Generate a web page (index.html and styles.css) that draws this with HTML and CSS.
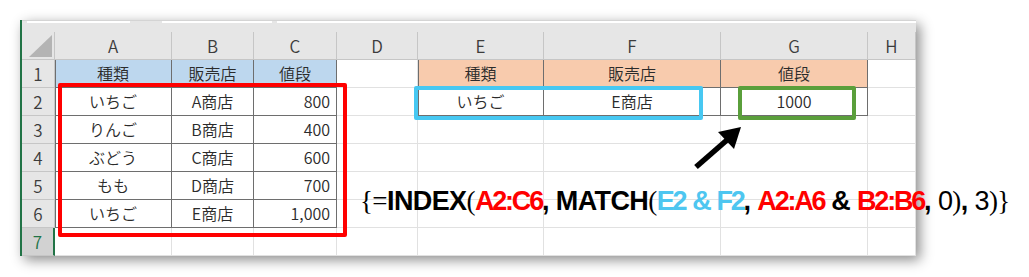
FILE: index.html
```html
<!DOCTYPE html>
<html lang="ja">
<head>
<meta charset="utf-8">
<title>INDEX MATCH 複数条件</title>
<link rel="stylesheet" href="styles.css">
</head>
<body>
<div class="page">
  <div class="sheet">
    <div class="strip">
      <span class="seg seg-a"></span>
      <span class="seg seg-b"></span>
      <span class="seg seg-c"></span>
    </div>
    <div class="grid">
      <div class="corner"><svg width="23" height="22" viewBox="0 0 23 22"><polygon points="23,0 23,22 0,22" fill="#b4b4b4"/></svg></div>
      <div class="cell hd">A</div>
      <div class="cell hd">B</div>
      <div class="cell hd">C</div>
      <div class="cell hd">D</div>
      <div class="cell hd">E</div>
      <div class="cell hd">F</div>
      <div class="cell hd">G</div>
      <div class="cell hd">H</div>

      <div class="cell rh">1</div>
      <div class="cell tb first blue">種類</div>
      <div class="cell tb blue">販売店</div>
      <div class="cell tb blue">値段</div>
      <div class="cell"></div>
      <div class="cell tb first peach">種類</div>
      <div class="cell tb peach">販売店</div>
      <div class="cell tb peach">値段</div>
      <div class="cell"></div>

      <div class="cell rh">2</div>
      <div class="cell tb first">いちご</div>
      <div class="cell tb">A商店</div>
      <div class="cell tb num">800</div>
      <div class="cell"></div>
      <div class="cell tb first">いちご</div>
      <div class="cell tb">E商店</div>
      <div class="cell tb">1000</div>
      <div class="cell"></div>

      <div class="cell rh">3</div>
      <div class="cell tb first">りんご</div>
      <div class="cell tb">B商店</div>
      <div class="cell tb num">400</div>
      <div class="cell"></div>
      <div class="cell"></div>
      <div class="cell"></div>
      <div class="cell"></div>
      <div class="cell"></div>

      <div class="cell rh">4</div>
      <div class="cell tb first">ぶどう</div>
      <div class="cell tb">C商店</div>
      <div class="cell tb num">600</div>
      <div class="cell"></div>
      <div class="cell"></div>
      <div class="cell"></div>
      <div class="cell"></div>
      <div class="cell"></div>

      <div class="cell rh">5</div>
      <div class="cell tb first">もも</div>
      <div class="cell tb">D商店</div>
      <div class="cell tb num">700</div>
      <div class="cell"></div>
      <div class="cell"></div>
      <div class="cell"></div>
      <div class="cell"></div>
      <div class="cell"></div>

      <div class="cell rh">6</div>
      <div class="cell tb first">いちご</div>
      <div class="cell tb">E商店</div>
      <div class="cell tb num">1,000</div>
      <div class="cell"></div>
      <div class="cell"></div>
      <div class="cell"></div>
      <div class="cell"></div>
      <div class="cell"></div>

      <div class="cell rh active">7</div>
      <div class="cell"></div>
      <div class="cell"></div>
      <div class="cell"></div>
      <div class="cell"></div>
      <div class="cell"></div>
      <div class="cell"></div>
      <div class="cell"></div>
      <div class="cell"></div>
    </div>
  </div>

  <!-- highlight frames drawn over the cells -->
  <div class="frame frame-red"></div>
  <div class="frame frame-cyan"></div>
  <div class="frame frame-green"></div>

  <svg class="arrow" width="60" height="52" viewBox="690 122 60 52">
    <line x1="696" y1="167" x2="727" y2="140" stroke="#000" stroke-width="5.5"/>
    <polygon points="741,127 718,132 734,149" fill="#000"/>
  </svg>

  <div class="formula"><span class="thin">{=</span>INDEX<span class="thin">(</span><span class="ref red">A2:C6</span>, MATCH<span class="thin">(</span><span class="ref cyan">E2<span class="gap"> </span>&amp;<span class="gap"> </span>F2</span>, <span class="ref red">A2:A6</span> &amp; <span class="ref red">B2:B6</span>, <span class="reg">0</span><span class="thin">)</span>, <span class="reg">3</span><span class="thin">)}</span></div>
</div>
</body>
</html>
```
FILE: styles.css
```css
html, body {
  margin: 0;
  padding: 0;
  background: #ffffff;
}

.page {
  position: relative;
  width: 1029px;
  height: 277px;
  padding: 20px 0 0 20px;
  box-sizing: border-box;
}

/* spreadsheet window */
.sheet {
  width: 896px;
  height: 236px;
  box-sizing: border-box;
  border-left: 2px solid #217346;
  background: #ffffff;
  overflow: hidden;
  box-shadow: 4px 4px 12px rgba(0, 0, 0, 0.45);
}

.strip {
  height: 12px;
  box-sizing: border-box;
  background: #e6e6e6;
  border-top: 1px solid #d4d4d4;
  display: flex;
  align-items: flex-start;
  padding-left: 5px;
}

.seg {
  height: 2px;
  background: #ffffff;
}

.seg-a { width: 103px; margin-right: 32px; }
.seg-b { width: 110px; margin-right: 5px; }
.seg-c { flex: 1; }

.grid {
  display: grid;
  grid-template-columns: 33px 117px 82px 83px 81px 126px 177px 147px 48px;
  grid-auto-rows: 28px;
}

.cell {
  box-sizing: border-box;
  border-right: 1px solid #e1e1e1;
  border-bottom: 1px solid #e1e1e1;
  font-family: "Noto Sans CJK JP", "Noto Sans", sans-serif;
  font-size: 16px;
  font-weight: 350;
  line-height: 27px;
  color: #2b2b2b;
  text-align: center;
  white-space: nowrap;
  overflow: hidden;
}

.corner {
  background: #e6e6e6;
  border-right: 1px solid #c6c6c6;
  border-bottom: 1px solid #c6c6c6;
  box-sizing: border-box;
  display: flex;
  align-items: flex-end;
  justify-content: flex-end;
  padding: 0 2px 2px 0;
}

.hd {
  background: #e6e6e6;
  border-right-color: #c6c6c6;
  border-bottom-color: #c6c6c6;
  color: #3c3c3c;
  font-size: 17px;
}

.rh {
  background: #e6e6e6;
  border-right-color: #c6c6c6;
  border-bottom-color: #c6c6c6;
  color: #3c3c3c;
  font-size: 17px;
}

.rh.active {
  background: #d2d2d2;
  color: #217346;
  border-right: 2px solid #217346;
}

.tb {
  border-right-color: #6e6e6e;
  border-bottom-color: #6e6e6e;
}

.first {
  box-shadow: inset 1px 0 0 #6e6e6e;
}

.blue { background: #bdd7ee; }
.peach { background: #f8cbad; }

.num {
  text-align: right;
  padding-right: 6px;
}

/* coloured frames over the ranges */
.frame {
  position: absolute;
  box-sizing: border-box;
  border-width: 4px;
  border-style: solid;
  border-radius: 2px;
}

.frame-red {
  left: 58px;
  top: 83px;
  width: 289px;
  height: 154px;
  border-color: #ff0000;
}

.frame-cyan {
  left: 414px;
  top: 86px;
  width: 289px;
  height: 34px;
  border-color: #47c8f2;
}

.frame-green {
  left: 738px;
  top: 86px;
  width: 118px;
  height: 34px;
  border-color: #5a9f3b;
}

.arrow {
  position: absolute;
  left: 690px;
  top: 122px;
}

.formula {
  position: absolute;
  left: 360px;
  top: 188px;
  font-family: "Liberation Sans", Arial, sans-serif;
  font-weight: bold;
  font-size: 27px;
  line-height: 27px;
  color: #000000;
  white-space: nowrap;
  letter-spacing: -0.6px;
}

.formula .thin {
  font-family: "Liberation Serif", serif;
  font-weight: normal;
}

.formula .reg {
  font-weight: normal;
}

.formula .ref {
  letter-spacing: -2.2px;
}

.formula .ref .gap {
  letter-spacing: -0.6px;
}

.red { color: #ff0000; }
.cyan { color: #4ec6f0; }
```
